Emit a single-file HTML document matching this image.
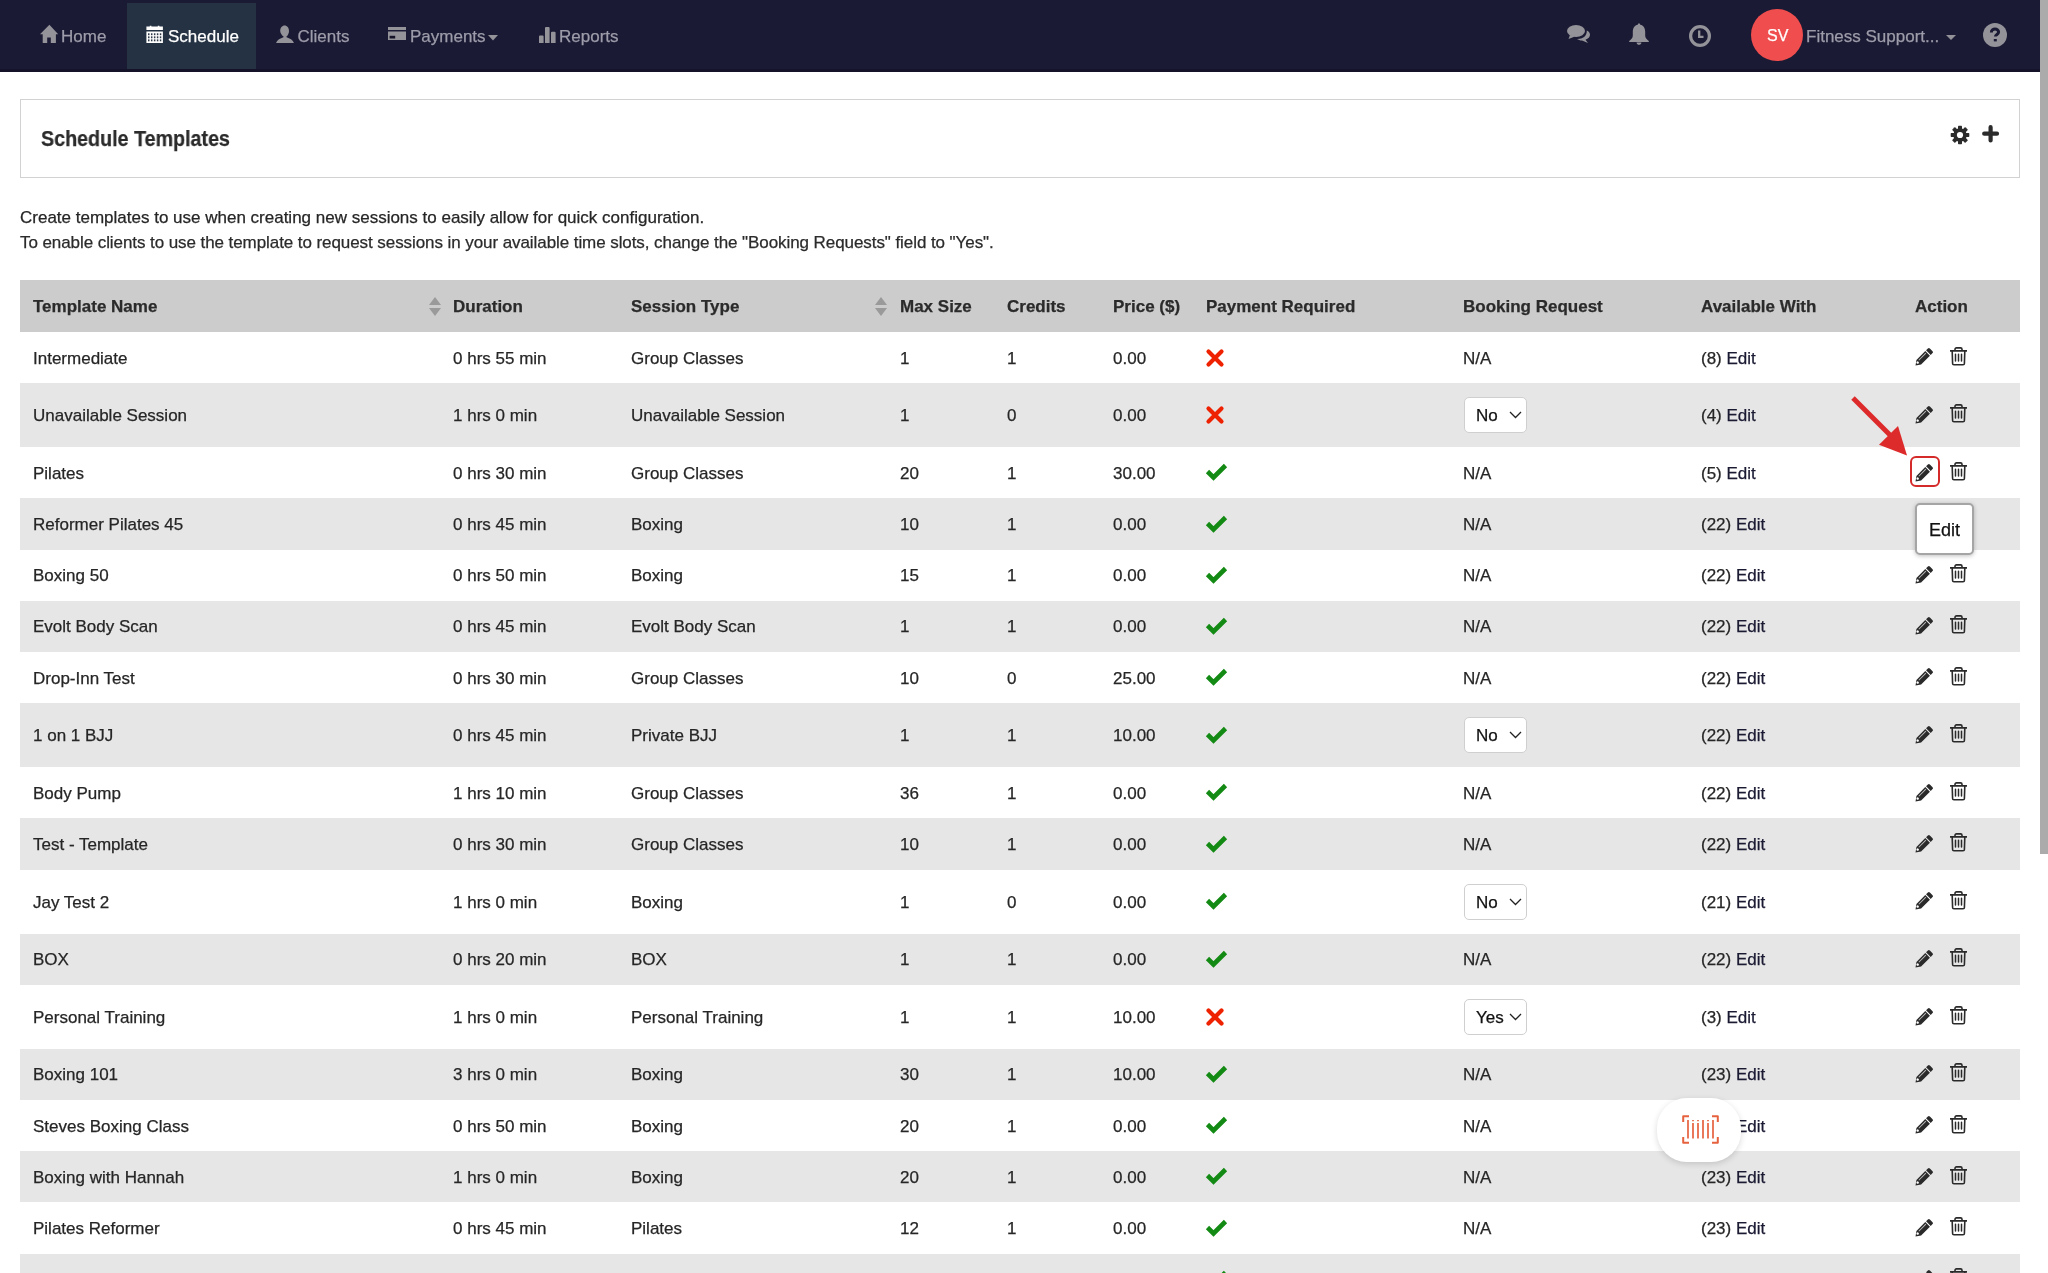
<!DOCTYPE html>
<html><head><meta charset="utf-8"><title>Schedule Templates</title><style>
html,body{margin:0;padding:0;width:2048px;height:1273px;overflow:hidden;background:#fff;font-family:"Liberation Sans",sans-serif;}
.t{position:absolute;white-space:nowrap;-webkit-text-stroke:0.25px currentColor}
.i{position:absolute;display:block;overflow:visible}
.nav{position:absolute;left:0;top:0;width:2040px;height:72px;background:#1b1a34;border-bottom:3px solid #14132a;box-sizing:border-box}
</style></head><body><div id="root" style="position:absolute;left:0;top:0;width:2048px;height:1273px;will-change:transform">
<div class="nav"></div>
<div style="position:absolute;left:127px;top:3px;width:129px;height:66px;background:#243243"></div>
<span class="t" style="left:61px;top:25.91px;font-size:17px;line-height:22px;color:#9c9caa;font-weight:normal;">Home</span>
<span class="t" style="left:168px;top:25.91px;font-size:17px;line-height:22px;color:#ffffff;font-weight:normal;">Schedule</span>
<span class="t" style="left:297.5px;top:25.91px;font-size:17px;line-height:22px;color:#9c9caa;font-weight:normal;">Clients</span>
<span class="t" style="left:410px;top:25.91px;font-size:17px;line-height:22px;color:#9c9caa;font-weight:normal;">Payments</span>
<span class="t" style="left:559px;top:25.91px;font-size:17px;line-height:22px;color:#9c9caa;font-weight:normal;">Reports</span>
<span class="t" style="left:1806px;top:25.91px;font-size:17px;line-height:22px;color:#9c9caa;font-weight:normal;">Fitness Support...</span>
<div style="position:absolute;left:1751px;top:9px;width:52px;height:52px;border-radius:50%;background:#f04e4e"></div>
<span class="t" style="left:1767px;top:25.46px;font-size:16px;line-height:21px;color:#ffffff;font-weight:normal;">SV</span>
<svg class="i" style="left:40px;top:25px" width="18" height="18" viewBox="0 0 18 18"><path fill="#939399" d="M9.4 -0.2 L0 9.3 H2.7 V18 H7.2 V12.4 H10.8 V18 H15.9 V9.3 H18.2 Z"/></svg>
<svg class="i" style="left:146px;top:25px" width="17" height="18" viewBox="0 0 17 18"><path fill="#fff" d="M0.4 1.6h3.4V0.8h1.6v0.8h6.4V0.8h1.6v0.8h3.5v3.3H0.4z M0.4 6.5h16.5V18H0.4z"/><g fill="#2e3846"><rect x="2.00" y="8.30" width="1.5" height="1.9"/><rect x="4.95" y="8.30" width="1.5" height="1.9"/><rect x="7.90" y="8.30" width="1.5" height="1.9"/><rect x="10.85" y="8.30" width="1.5" height="1.9"/><rect x="13.80" y="8.30" width="1.5" height="1.9"/><rect x="2.00" y="11.35" width="1.5" height="1.9"/><rect x="4.95" y="11.35" width="1.5" height="1.9"/><rect x="7.90" y="11.35" width="1.5" height="1.9"/><rect x="10.85" y="11.35" width="1.5" height="1.9"/><rect x="13.80" y="11.35" width="1.5" height="1.9"/><rect x="2.00" y="14.40" width="1.5" height="1.9"/><rect x="4.95" y="14.40" width="1.5" height="1.9"/><rect x="7.90" y="14.40" width="1.5" height="1.9"/><rect x="10.85" y="14.40" width="1.5" height="1.9"/><rect x="13.80" y="14.40" width="1.5" height="1.9"/></g></svg>
<svg class="i" style="left:276px;top:25px" width="18" height="18" viewBox="0 0 18 18"><path fill="#939399" d="M8.6 0.5c2.5 0 4.4 2.3 4.4 5.5 0 2.5-1.2 4.6-2.6 5.6l0.2 0.7c3 1 6.4 2.6 7.4 5.7H0c1-3.1 4.4-4.7 7.4-5.7l0.2-0.7C6.2 10.6 4.2 8.5 4.2 6 4.2 2.8 6.1 0.5 8.6 0.5z"/></svg>
<svg class="i" style="left:388px;top:27.3px" width="18" height="14" viewBox="0 0 18 14"><path fill="#939399" d="M0 0h18v3H0z M0 4.5h18V13H0z"/><rect x="1.6" y="8.8" width="5.6" height="2.7" fill="#141328"/></svg>
<svg class="i" style="left:488px;top:35px" width="10" height="6" viewBox="0 0 10 6"><path fill="#939399" d="M0 0h10L5 5.5z"/></svg>
<svg class="i" style="left:539px;top:27px" width="17" height="16" viewBox="0 0 17 16"><path fill="#939399" d="M0 9.5a1 1 0 0 1 1-1h2.6a1 1 0 0 1 1 1V16H0z M6 1a1 1 0 0 1 1-1h2.6a1 1 0 0 1 1 1V16H6z M12 5.8a1 1 0 0 1 1-1h2.6a1 1 0 0 1 1 1V16H12z"/></svg>
<svg class="i" style="left:1567px;top:25px" width="23" height="18" viewBox="0 0 23 18"><ellipse cx="9" cy="6" rx="9" ry="6" fill="#939399"/><path fill="#939399" d="M3 10 L1.5 14 L8 11.5z"/><path fill="#939399" d="M19.8 5.5c2 1 3.2 2.5 3.2 4.3 0 2.2-1.8 4-4.5 4.9l2.5 3.3-6-2.6c-2 0-3.8-.6-5-1.5 5 .3 10-2.3 9.8-8.4z"/></svg>
<svg class="i" style="left:1629px;top:22.7px" width="20" height="22" viewBox="0 0 20 22"><path fill="#939399" d="M10 0.5c0.8 0 1.2.5 1.2 1.2 3.2.6 5 3.3 5 7v4c0 2 1.5 3.6 3.6 5.2v1H0.2v-1c2.1-1.6 3.6-3.2 3.6-5.2v-4c0-3.7 1.8-6.4 5-7 0-.7.4-1.2 1.2-1.2z M7.6 19.6h4.8c0 1.3-1.1 2.3-2.4 2.3s-2.4-1-2.4-2.3z"/></svg>
<svg class="i" style="left:1689px;top:25px" width="22" height="22" viewBox="0 0 22 22"><circle cx="11" cy="11" r="9.4" fill="none" stroke="#939399" stroke-width="3.2"/><path fill="none" stroke="#939399" stroke-width="2.3" d="M10.2 5.5v6.3h4.3"/></svg>
<svg class="i" style="left:1946px;top:35px" width="10" height="6" viewBox="0 0 10 6"><path fill="#939399" d="M0 0h10L5 5z"/></svg>
<svg class="i" style="left:1983px;top:23px" width="24" height="24" viewBox="0 0 24 24"><circle cx="12" cy="12" r="12" fill="#939399"/><path fill="none" stroke="#1b1a34" stroke-width="3" d="M8.4 9.4c0-2.2 1.6-3.4 3.6-3.4s3.6 1.2 3.6 3c0 2.4-3.2 2.4-3.2 4.6"/><rect x="10.8" y="16" width="3" height="2.4" fill="#1b1a34"/></svg>
<div style="position:absolute;left:2040px;top:0;width:8px;height:854px;background:#ababab"></div>
<div style="position:absolute;left:20px;top:99px;width:1998px;height:77px;border:1px solid #d2d2d2"></div>
<span class="t" style="left:41px;top:124.18px;font-size:22px;line-height:29px;color:#2b2b2b;font-weight:bold;transform:scaleX(0.895);transform-origin:0 0">Schedule Templates</span>
<svg class="i" style="left:1950px;top:124.8px" width="20" height="20" viewBox="0 0 20 20"><g fill="#2b2b2b"><circle cx="10" cy="10" r="6.7"/><rect x="8" y="0.7" width="4" height="5" rx="0.7" transform="rotate(0 10 10)"/><rect x="8" y="0.7" width="4" height="5" rx="0.7" transform="rotate(45 10 10)"/><rect x="8" y="0.7" width="4" height="5" rx="0.7" transform="rotate(90 10 10)"/><rect x="8" y="0.7" width="4" height="5" rx="0.7" transform="rotate(135 10 10)"/><rect x="8" y="0.7" width="4" height="5" rx="0.7" transform="rotate(180 10 10)"/><rect x="8" y="0.7" width="4" height="5" rx="0.7" transform="rotate(225 10 10)"/><rect x="8" y="0.7" width="4" height="5" rx="0.7" transform="rotate(270 10 10)"/><rect x="8" y="0.7" width="4" height="5" rx="0.7" transform="rotate(315 10 10)"/></g><circle cx="10" cy="10" r="3.1" fill="#fff"/></svg>
<svg class="i" style="left:1981.5px;top:125px" width="18" height="18" viewBox="0 0 18 18"><path stroke="#2b2b2b" stroke-width="4.2" stroke-linecap="round" d="M8.6 2.2V15.4M2.2 8.7H15"/></svg>
<span class="t" style="left:20px;top:206.81px;font-size:17px;line-height:22px;color:#262626;font-weight:normal;">Create templates to use when creating new sessions to easily allow for quick configuration.</span>
<span class="t" style="left:20px;top:231.51px;font-size:17px;line-height:22px;color:#2b2b2b;font-weight:normal;letter-spacing:-0.075px">To enable clients to use the template to request sessions in your available time slots, change the "Booking Requests" field to "Yes".</span>
<div style="position:absolute;left:20px;top:280px;width:2000px;height:52px;background:#cccccc"></div>
<span class="t" style="left:33px;top:295.91px;font-size:17px;line-height:22px;color:#2b2b2b;font-weight:bold;">Template Name</span>
<span class="t" style="left:453px;top:295.91px;font-size:17px;line-height:22px;color:#2b2b2b;font-weight:bold;">Duration</span>
<span class="t" style="left:631px;top:295.91px;font-size:17px;line-height:22px;color:#2b2b2b;font-weight:bold;">Session Type</span>
<span class="t" style="left:900px;top:295.91px;font-size:17px;line-height:22px;color:#2b2b2b;font-weight:bold;">Max Size</span>
<span class="t" style="left:1007px;top:295.91px;font-size:17px;line-height:22px;color:#2b2b2b;font-weight:bold;">Credits</span>
<span class="t" style="left:1113px;top:295.91px;font-size:17px;line-height:22px;color:#2b2b2b;font-weight:bold;">Price ($)</span>
<span class="t" style="left:1206px;top:295.91px;font-size:17px;line-height:22px;color:#2b2b2b;font-weight:bold;">Payment Required</span>
<span class="t" style="left:1463px;top:295.91px;font-size:17px;line-height:22px;color:#2b2b2b;font-weight:bold;">Booking Request</span>
<span class="t" style="left:1701px;top:295.91px;font-size:17px;line-height:22px;color:#2b2b2b;font-weight:bold;">Available With</span>
<span class="t" style="left:1915px;top:295.91px;font-size:17px;line-height:22px;color:#2b2b2b;font-weight:bold;">Action</span>
<svg class="i" style="left:428.5px;top:297px" width="12" height="19" viewBox="0 0 12 19"><path fill="#9a9a9a" d="M6 0L12 8H0z"/><path fill="#9a9a9a" d="M0 11h12L6 19z"/></svg>
<svg class="i" style="left:875px;top:297px" width="12" height="19" viewBox="0 0 12 19"><path fill="#9a9a9a" d="M6 0L12 8H0z"/><path fill="#9a9a9a" d="M0 11h12L6 19z"/></svg>
<div style="position:absolute;left:20px;top:332.00px;width:2000px;height:51.2px;background:#ffffff"></div>
<span class="t" style="left:33px;top:347.51px;font-size:17px;line-height:22px;color:#262626;font-weight:normal;">Intermediate</span>
<span class="t" style="left:453px;top:347.51px;font-size:17px;line-height:22px;color:#262626;font-weight:normal;">0 hrs 55 min</span>
<span class="t" style="left:631px;top:347.51px;font-size:17px;line-height:22px;color:#262626;font-weight:normal;">Group Classes</span>
<span class="t" style="left:900px;top:347.51px;font-size:17px;line-height:22px;color:#262626;font-weight:normal;">1</span>
<span class="t" style="left:1007px;top:347.51px;font-size:17px;line-height:22px;color:#262626;font-weight:normal;">1</span>
<span class="t" style="left:1113px;top:347.51px;font-size:17px;line-height:22px;color:#262626;font-weight:normal;">0.00</span>
<svg class="i" style="left:1205.5px;top:348.60px" width="18" height="18" viewBox="0 0 18 18"><path stroke="#ee2200" stroke-width="4.2" stroke-linecap="round" d="M2.5 2.5L15.5 15.5M15.5 2.5L2.5 15.5"/></svg>
<span class="t" style="left:1463px;top:347.51px;font-size:17px;line-height:22px;color:#262626;font-weight:normal;">N/A</span>
<span class="t" style="left:1701px;top:347.51px;font-size:17px;line-height:22px;color:#262626">(8) <span style="color:#1a1a33">Edit</span></span>
<svg class="i" style="left:1914.5px;top:347.40px" width="19" height="19" viewBox="0 0 19 19"><g transform="rotate(45 9.5 9.5)"><path fill="#2a2a2a" d="M6.2 1.4a1.4 1.4 0 0 1 1.4-1.4h3.8a1.4 1.4 0 0 1 1.4 1.4V4H6.2z M6.2 5.1h6.6V17.6L9.5 22.2 6.2 17.6z"/><rect x="7.6" y="6.2" width="1" height="10" fill="#bbb"/><circle cx="8.9" cy="18.6" r="1.25" fill="#fff"/></g></svg>
<svg class="i" style="left:1950px;top:346.60px" width="17" height="19" viewBox="0 0 17 19"><path fill="none" stroke="#2a2a2a" stroke-width="1.6" d="M0 3.9H17 M5 3.9V2.2C5 1.4 5.6 0.9 6.4 0.9h4.2c.8 0 1.4.5 1.4 1.3v1.7 M2.2 4.2l.4 12.2c0 .8.6 1.3 1.4 1.3h9c.8 0 1.4-.5 1.4-1.3l.4-12.2"/><path stroke="#2a2a2a" stroke-width="1.5" stroke-linecap="round" d="M5.5 7.3v6.8M8.5 7.3v6.8M11.5 7.3v6.8"/></svg>
<div style="position:absolute;left:20px;top:383.20px;width:2000px;height:64.0px;background:#e6e6e6"></div>
<span class="t" style="left:33px;top:405.11px;font-size:17px;line-height:22px;color:#262626;font-weight:normal;">Unavailable Session</span>
<span class="t" style="left:453px;top:405.11px;font-size:17px;line-height:22px;color:#262626;font-weight:normal;">1 hrs 0 min</span>
<span class="t" style="left:631px;top:405.11px;font-size:17px;line-height:22px;color:#262626;font-weight:normal;">Unavailable Session</span>
<span class="t" style="left:900px;top:405.11px;font-size:17px;line-height:22px;color:#262626;font-weight:normal;">1</span>
<span class="t" style="left:1007px;top:405.11px;font-size:17px;line-height:22px;color:#262626;font-weight:normal;">0</span>
<span class="t" style="left:1113px;top:405.11px;font-size:17px;line-height:22px;color:#262626;font-weight:normal;">0.00</span>
<svg class="i" style="left:1205.5px;top:406.20px" width="18" height="18" viewBox="0 0 18 18"><path stroke="#ee2200" stroke-width="4.2" stroke-linecap="round" d="M2.5 2.5L15.5 15.5M15.5 2.5L2.5 15.5"/></svg>
<div style="position:absolute;left:1464px;top:397.20px;width:61px;height:34px;border:1px solid #cfcfcf;border-radius:5px;background:#fff"></div>
<span class="t" style="left:1476px;top:405.11px;font-size:17px;line-height:22px;color:#111111;font-weight:normal;">No</span>
<svg class="i" style="left:1509px;top:411.20px" width="13" height="8" viewBox="0 0 13 8"><path fill="none" stroke="#222" stroke-width="1.3" d="M1 1l5.5 5.5L12 1"/></svg>
<span class="t" style="left:1701px;top:405.11px;font-size:17px;line-height:22px;color:#262626">(4) <span style="color:#1a1a33">Edit</span></span>
<svg class="i" style="left:1914.5px;top:405.00px" width="19" height="19" viewBox="0 0 19 19"><g transform="rotate(45 9.5 9.5)"><path fill="#2a2a2a" d="M6.2 1.4a1.4 1.4 0 0 1 1.4-1.4h3.8a1.4 1.4 0 0 1 1.4 1.4V4H6.2z M6.2 5.1h6.6V17.6L9.5 22.2 6.2 17.6z"/><rect x="7.6" y="6.2" width="1" height="10" fill="#bbb"/><circle cx="8.9" cy="18.6" r="1.25" fill="#fff"/></g></svg>
<svg class="i" style="left:1950px;top:404.20px" width="17" height="19" viewBox="0 0 17 19"><path fill="none" stroke="#2a2a2a" stroke-width="1.6" d="M0 3.9H17 M5 3.9V2.2C5 1.4 5.6 0.9 6.4 0.9h4.2c.8 0 1.4.5 1.4 1.3v1.7 M2.2 4.2l.4 12.2c0 .8.6 1.3 1.4 1.3h9c.8 0 1.4-.5 1.4-1.3l.4-12.2"/><path stroke="#2a2a2a" stroke-width="1.5" stroke-linecap="round" d="M5.5 7.3v6.8M8.5 7.3v6.8M11.5 7.3v6.8"/></svg>
<div style="position:absolute;left:20px;top:447.20px;width:2000px;height:51.2px;background:#ffffff"></div>
<span class="t" style="left:33px;top:462.71px;font-size:17px;line-height:22px;color:#262626;font-weight:normal;">Pilates</span>
<span class="t" style="left:453px;top:462.71px;font-size:17px;line-height:22px;color:#262626;font-weight:normal;">0 hrs 30 min</span>
<span class="t" style="left:631px;top:462.71px;font-size:17px;line-height:22px;color:#262626;font-weight:normal;">Group Classes</span>
<span class="t" style="left:900px;top:462.71px;font-size:17px;line-height:22px;color:#262626;font-weight:normal;">20</span>
<span class="t" style="left:1007px;top:462.71px;font-size:17px;line-height:22px;color:#262626;font-weight:normal;">1</span>
<span class="t" style="left:1113px;top:462.71px;font-size:17px;line-height:22px;color:#262626;font-weight:normal;">30.00</span>
<svg class="i" style="left:1206px;top:463.30px" width="22" height="18" viewBox="0 0 22 18"><path fill="none" stroke="#138a13" stroke-width="4.6" d="M1.5 8.5L7.5 14.5L19.5 2.5"/></svg>
<span class="t" style="left:1463px;top:462.71px;font-size:17px;line-height:22px;color:#262626;font-weight:normal;">N/A</span>
<span class="t" style="left:1701px;top:462.71px;font-size:17px;line-height:22px;color:#262626">(5) <span style="color:#1a1a33">Edit</span></span>
<svg class="i" style="left:1914.5px;top:462.60px" width="19" height="19" viewBox="0 0 19 19"><g transform="rotate(45 9.5 9.5)"><path fill="#2a2a2a" d="M6.2 1.4a1.4 1.4 0 0 1 1.4-1.4h3.8a1.4 1.4 0 0 1 1.4 1.4V4H6.2z M6.2 5.1h6.6V17.6L9.5 22.2 6.2 17.6z"/><rect x="7.6" y="6.2" width="1" height="10" fill="#bbb"/><circle cx="8.9" cy="18.6" r="1.25" fill="#fff"/></g></svg>
<svg class="i" style="left:1950px;top:461.80px" width="17" height="19" viewBox="0 0 17 19"><path fill="none" stroke="#2a2a2a" stroke-width="1.6" d="M0 3.9H17 M5 3.9V2.2C5 1.4 5.6 0.9 6.4 0.9h4.2c.8 0 1.4.5 1.4 1.3v1.7 M2.2 4.2l.4 12.2c0 .8.6 1.3 1.4 1.3h9c.8 0 1.4-.5 1.4-1.3l.4-12.2"/><path stroke="#2a2a2a" stroke-width="1.5" stroke-linecap="round" d="M5.5 7.3v6.8M8.5 7.3v6.8M11.5 7.3v6.8"/></svg>
<div style="position:absolute;left:20px;top:498.40px;width:2000px;height:51.2px;background:#e6e6e6"></div>
<span class="t" style="left:33px;top:513.91px;font-size:17px;line-height:22px;color:#262626;font-weight:normal;">Reformer Pilates 45</span>
<span class="t" style="left:453px;top:513.91px;font-size:17px;line-height:22px;color:#262626;font-weight:normal;">0 hrs 45 min</span>
<span class="t" style="left:631px;top:513.91px;font-size:17px;line-height:22px;color:#262626;font-weight:normal;">Boxing</span>
<span class="t" style="left:900px;top:513.91px;font-size:17px;line-height:22px;color:#262626;font-weight:normal;">10</span>
<span class="t" style="left:1007px;top:513.91px;font-size:17px;line-height:22px;color:#262626;font-weight:normal;">1</span>
<span class="t" style="left:1113px;top:513.91px;font-size:17px;line-height:22px;color:#262626;font-weight:normal;">0.00</span>
<svg class="i" style="left:1206px;top:514.50px" width="22" height="18" viewBox="0 0 22 18"><path fill="none" stroke="#138a13" stroke-width="4.6" d="M1.5 8.5L7.5 14.5L19.5 2.5"/></svg>
<span class="t" style="left:1463px;top:513.91px;font-size:17px;line-height:22px;color:#262626;font-weight:normal;">N/A</span>
<span class="t" style="left:1701px;top:513.91px;font-size:17px;line-height:22px;color:#262626">(22) <span style="color:#1a1a33">Edit</span></span>
<div style="position:absolute;left:20px;top:549.60px;width:2000px;height:51.2px;background:#ffffff"></div>
<span class="t" style="left:33px;top:565.11px;font-size:17px;line-height:22px;color:#262626;font-weight:normal;">Boxing 50</span>
<span class="t" style="left:453px;top:565.11px;font-size:17px;line-height:22px;color:#262626;font-weight:normal;">0 hrs 50 min</span>
<span class="t" style="left:631px;top:565.11px;font-size:17px;line-height:22px;color:#262626;font-weight:normal;">Boxing</span>
<span class="t" style="left:900px;top:565.11px;font-size:17px;line-height:22px;color:#262626;font-weight:normal;">15</span>
<span class="t" style="left:1007px;top:565.11px;font-size:17px;line-height:22px;color:#262626;font-weight:normal;">1</span>
<span class="t" style="left:1113px;top:565.11px;font-size:17px;line-height:22px;color:#262626;font-weight:normal;">0.00</span>
<svg class="i" style="left:1206px;top:565.70px" width="22" height="18" viewBox="0 0 22 18"><path fill="none" stroke="#138a13" stroke-width="4.6" d="M1.5 8.5L7.5 14.5L19.5 2.5"/></svg>
<span class="t" style="left:1463px;top:565.11px;font-size:17px;line-height:22px;color:#262626;font-weight:normal;">N/A</span>
<span class="t" style="left:1701px;top:565.11px;font-size:17px;line-height:22px;color:#262626">(22) <span style="color:#1a1a33">Edit</span></span>
<svg class="i" style="left:1914.5px;top:565.00px" width="19" height="19" viewBox="0 0 19 19"><g transform="rotate(45 9.5 9.5)"><path fill="#2a2a2a" d="M6.2 1.4a1.4 1.4 0 0 1 1.4-1.4h3.8a1.4 1.4 0 0 1 1.4 1.4V4H6.2z M6.2 5.1h6.6V17.6L9.5 22.2 6.2 17.6z"/><rect x="7.6" y="6.2" width="1" height="10" fill="#bbb"/><circle cx="8.9" cy="18.6" r="1.25" fill="#fff"/></g></svg>
<svg class="i" style="left:1950px;top:564.20px" width="17" height="19" viewBox="0 0 17 19"><path fill="none" stroke="#2a2a2a" stroke-width="1.6" d="M0 3.9H17 M5 3.9V2.2C5 1.4 5.6 0.9 6.4 0.9h4.2c.8 0 1.4.5 1.4 1.3v1.7 M2.2 4.2l.4 12.2c0 .8.6 1.3 1.4 1.3h9c.8 0 1.4-.5 1.4-1.3l.4-12.2"/><path stroke="#2a2a2a" stroke-width="1.5" stroke-linecap="round" d="M5.5 7.3v6.8M8.5 7.3v6.8M11.5 7.3v6.8"/></svg>
<div style="position:absolute;left:20px;top:600.80px;width:2000px;height:51.2px;background:#e6e6e6"></div>
<span class="t" style="left:33px;top:616.31px;font-size:17px;line-height:22px;color:#262626;font-weight:normal;">Evolt Body Scan</span>
<span class="t" style="left:453px;top:616.31px;font-size:17px;line-height:22px;color:#262626;font-weight:normal;">0 hrs 45 min</span>
<span class="t" style="left:631px;top:616.31px;font-size:17px;line-height:22px;color:#262626;font-weight:normal;">Evolt Body Scan</span>
<span class="t" style="left:900px;top:616.31px;font-size:17px;line-height:22px;color:#262626;font-weight:normal;">1</span>
<span class="t" style="left:1007px;top:616.31px;font-size:17px;line-height:22px;color:#262626;font-weight:normal;">1</span>
<span class="t" style="left:1113px;top:616.31px;font-size:17px;line-height:22px;color:#262626;font-weight:normal;">0.00</span>
<svg class="i" style="left:1206px;top:616.90px" width="22" height="18" viewBox="0 0 22 18"><path fill="none" stroke="#138a13" stroke-width="4.6" d="M1.5 8.5L7.5 14.5L19.5 2.5"/></svg>
<span class="t" style="left:1463px;top:616.31px;font-size:17px;line-height:22px;color:#262626;font-weight:normal;">N/A</span>
<span class="t" style="left:1701px;top:616.31px;font-size:17px;line-height:22px;color:#262626">(22) <span style="color:#1a1a33">Edit</span></span>
<svg class="i" style="left:1914.5px;top:616.20px" width="19" height="19" viewBox="0 0 19 19"><g transform="rotate(45 9.5 9.5)"><path fill="#2a2a2a" d="M6.2 1.4a1.4 1.4 0 0 1 1.4-1.4h3.8a1.4 1.4 0 0 1 1.4 1.4V4H6.2z M6.2 5.1h6.6V17.6L9.5 22.2 6.2 17.6z"/><rect x="7.6" y="6.2" width="1" height="10" fill="#bbb"/><circle cx="8.9" cy="18.6" r="1.25" fill="#fff"/></g></svg>
<svg class="i" style="left:1950px;top:615.40px" width="17" height="19" viewBox="0 0 17 19"><path fill="none" stroke="#2a2a2a" stroke-width="1.6" d="M0 3.9H17 M5 3.9V2.2C5 1.4 5.6 0.9 6.4 0.9h4.2c.8 0 1.4.5 1.4 1.3v1.7 M2.2 4.2l.4 12.2c0 .8.6 1.3 1.4 1.3h9c.8 0 1.4-.5 1.4-1.3l.4-12.2"/><path stroke="#2a2a2a" stroke-width="1.5" stroke-linecap="round" d="M5.5 7.3v6.8M8.5 7.3v6.8M11.5 7.3v6.8"/></svg>
<div style="position:absolute;left:20px;top:652.00px;width:2000px;height:51.2px;background:#ffffff"></div>
<span class="t" style="left:33px;top:667.51px;font-size:17px;line-height:22px;color:#262626;font-weight:normal;">Drop-Inn Test</span>
<span class="t" style="left:453px;top:667.51px;font-size:17px;line-height:22px;color:#262626;font-weight:normal;">0 hrs 30 min</span>
<span class="t" style="left:631px;top:667.51px;font-size:17px;line-height:22px;color:#262626;font-weight:normal;">Group Classes</span>
<span class="t" style="left:900px;top:667.51px;font-size:17px;line-height:22px;color:#262626;font-weight:normal;">10</span>
<span class="t" style="left:1007px;top:667.51px;font-size:17px;line-height:22px;color:#262626;font-weight:normal;">0</span>
<span class="t" style="left:1113px;top:667.51px;font-size:17px;line-height:22px;color:#262626;font-weight:normal;">25.00</span>
<svg class="i" style="left:1206px;top:668.10px" width="22" height="18" viewBox="0 0 22 18"><path fill="none" stroke="#138a13" stroke-width="4.6" d="M1.5 8.5L7.5 14.5L19.5 2.5"/></svg>
<span class="t" style="left:1463px;top:667.51px;font-size:17px;line-height:22px;color:#262626;font-weight:normal;">N/A</span>
<span class="t" style="left:1701px;top:667.51px;font-size:17px;line-height:22px;color:#262626">(22) <span style="color:#1a1a33">Edit</span></span>
<svg class="i" style="left:1914.5px;top:667.40px" width="19" height="19" viewBox="0 0 19 19"><g transform="rotate(45 9.5 9.5)"><path fill="#2a2a2a" d="M6.2 1.4a1.4 1.4 0 0 1 1.4-1.4h3.8a1.4 1.4 0 0 1 1.4 1.4V4H6.2z M6.2 5.1h6.6V17.6L9.5 22.2 6.2 17.6z"/><rect x="7.6" y="6.2" width="1" height="10" fill="#bbb"/><circle cx="8.9" cy="18.6" r="1.25" fill="#fff"/></g></svg>
<svg class="i" style="left:1950px;top:666.60px" width="17" height="19" viewBox="0 0 17 19"><path fill="none" stroke="#2a2a2a" stroke-width="1.6" d="M0 3.9H17 M5 3.9V2.2C5 1.4 5.6 0.9 6.4 0.9h4.2c.8 0 1.4.5 1.4 1.3v1.7 M2.2 4.2l.4 12.2c0 .8.6 1.3 1.4 1.3h9c.8 0 1.4-.5 1.4-1.3l.4-12.2"/><path stroke="#2a2a2a" stroke-width="1.5" stroke-linecap="round" d="M5.5 7.3v6.8M8.5 7.3v6.8M11.5 7.3v6.8"/></svg>
<div style="position:absolute;left:20px;top:703.20px;width:2000px;height:64.0px;background:#e6e6e6"></div>
<span class="t" style="left:33px;top:725.11px;font-size:17px;line-height:22px;color:#262626;font-weight:normal;">1 on 1 BJJ</span>
<span class="t" style="left:453px;top:725.11px;font-size:17px;line-height:22px;color:#262626;font-weight:normal;">0 hrs 45 min</span>
<span class="t" style="left:631px;top:725.11px;font-size:17px;line-height:22px;color:#262626;font-weight:normal;">Private BJJ</span>
<span class="t" style="left:900px;top:725.11px;font-size:17px;line-height:22px;color:#262626;font-weight:normal;">1</span>
<span class="t" style="left:1007px;top:725.11px;font-size:17px;line-height:22px;color:#262626;font-weight:normal;">1</span>
<span class="t" style="left:1113px;top:725.11px;font-size:17px;line-height:22px;color:#262626;font-weight:normal;">10.00</span>
<svg class="i" style="left:1206px;top:725.70px" width="22" height="18" viewBox="0 0 22 18"><path fill="none" stroke="#138a13" stroke-width="4.6" d="M1.5 8.5L7.5 14.5L19.5 2.5"/></svg>
<div style="position:absolute;left:1464px;top:717.20px;width:61px;height:34px;border:1px solid #cfcfcf;border-radius:5px;background:#fff"></div>
<span class="t" style="left:1476px;top:725.11px;font-size:17px;line-height:22px;color:#111111;font-weight:normal;">No</span>
<svg class="i" style="left:1509px;top:731.20px" width="13" height="8" viewBox="0 0 13 8"><path fill="none" stroke="#222" stroke-width="1.3" d="M1 1l5.5 5.5L12 1"/></svg>
<span class="t" style="left:1701px;top:725.11px;font-size:17px;line-height:22px;color:#262626">(22) <span style="color:#1a1a33">Edit</span></span>
<svg class="i" style="left:1914.5px;top:725.00px" width="19" height="19" viewBox="0 0 19 19"><g transform="rotate(45 9.5 9.5)"><path fill="#2a2a2a" d="M6.2 1.4a1.4 1.4 0 0 1 1.4-1.4h3.8a1.4 1.4 0 0 1 1.4 1.4V4H6.2z M6.2 5.1h6.6V17.6L9.5 22.2 6.2 17.6z"/><rect x="7.6" y="6.2" width="1" height="10" fill="#bbb"/><circle cx="8.9" cy="18.6" r="1.25" fill="#fff"/></g></svg>
<svg class="i" style="left:1950px;top:724.20px" width="17" height="19" viewBox="0 0 17 19"><path fill="none" stroke="#2a2a2a" stroke-width="1.6" d="M0 3.9H17 M5 3.9V2.2C5 1.4 5.6 0.9 6.4 0.9h4.2c.8 0 1.4.5 1.4 1.3v1.7 M2.2 4.2l.4 12.2c0 .8.6 1.3 1.4 1.3h9c.8 0 1.4-.5 1.4-1.3l.4-12.2"/><path stroke="#2a2a2a" stroke-width="1.5" stroke-linecap="round" d="M5.5 7.3v6.8M8.5 7.3v6.8M11.5 7.3v6.8"/></svg>
<div style="position:absolute;left:20px;top:767.20px;width:2000px;height:51.2px;background:#ffffff"></div>
<span class="t" style="left:33px;top:782.71px;font-size:17px;line-height:22px;color:#262626;font-weight:normal;">Body Pump</span>
<span class="t" style="left:453px;top:782.71px;font-size:17px;line-height:22px;color:#262626;font-weight:normal;">1 hrs 10 min</span>
<span class="t" style="left:631px;top:782.71px;font-size:17px;line-height:22px;color:#262626;font-weight:normal;">Group Classes</span>
<span class="t" style="left:900px;top:782.71px;font-size:17px;line-height:22px;color:#262626;font-weight:normal;">36</span>
<span class="t" style="left:1007px;top:782.71px;font-size:17px;line-height:22px;color:#262626;font-weight:normal;">1</span>
<span class="t" style="left:1113px;top:782.71px;font-size:17px;line-height:22px;color:#262626;font-weight:normal;">0.00</span>
<svg class="i" style="left:1206px;top:783.30px" width="22" height="18" viewBox="0 0 22 18"><path fill="none" stroke="#138a13" stroke-width="4.6" d="M1.5 8.5L7.5 14.5L19.5 2.5"/></svg>
<span class="t" style="left:1463px;top:782.71px;font-size:17px;line-height:22px;color:#262626;font-weight:normal;">N/A</span>
<span class="t" style="left:1701px;top:782.71px;font-size:17px;line-height:22px;color:#262626">(22) <span style="color:#1a1a33">Edit</span></span>
<svg class="i" style="left:1914.5px;top:782.60px" width="19" height="19" viewBox="0 0 19 19"><g transform="rotate(45 9.5 9.5)"><path fill="#2a2a2a" d="M6.2 1.4a1.4 1.4 0 0 1 1.4-1.4h3.8a1.4 1.4 0 0 1 1.4 1.4V4H6.2z M6.2 5.1h6.6V17.6L9.5 22.2 6.2 17.6z"/><rect x="7.6" y="6.2" width="1" height="10" fill="#bbb"/><circle cx="8.9" cy="18.6" r="1.25" fill="#fff"/></g></svg>
<svg class="i" style="left:1950px;top:781.80px" width="17" height="19" viewBox="0 0 17 19"><path fill="none" stroke="#2a2a2a" stroke-width="1.6" d="M0 3.9H17 M5 3.9V2.2C5 1.4 5.6 0.9 6.4 0.9h4.2c.8 0 1.4.5 1.4 1.3v1.7 M2.2 4.2l.4 12.2c0 .8.6 1.3 1.4 1.3h9c.8 0 1.4-.5 1.4-1.3l.4-12.2"/><path stroke="#2a2a2a" stroke-width="1.5" stroke-linecap="round" d="M5.5 7.3v6.8M8.5 7.3v6.8M11.5 7.3v6.8"/></svg>
<div style="position:absolute;left:20px;top:818.40px;width:2000px;height:51.2px;background:#e6e6e6"></div>
<span class="t" style="left:33px;top:833.91px;font-size:17px;line-height:22px;color:#262626;font-weight:normal;">Test - Template</span>
<span class="t" style="left:453px;top:833.91px;font-size:17px;line-height:22px;color:#262626;font-weight:normal;">0 hrs 30 min</span>
<span class="t" style="left:631px;top:833.91px;font-size:17px;line-height:22px;color:#262626;font-weight:normal;">Group Classes</span>
<span class="t" style="left:900px;top:833.91px;font-size:17px;line-height:22px;color:#262626;font-weight:normal;">10</span>
<span class="t" style="left:1007px;top:833.91px;font-size:17px;line-height:22px;color:#262626;font-weight:normal;">1</span>
<span class="t" style="left:1113px;top:833.91px;font-size:17px;line-height:22px;color:#262626;font-weight:normal;">0.00</span>
<svg class="i" style="left:1206px;top:834.50px" width="22" height="18" viewBox="0 0 22 18"><path fill="none" stroke="#138a13" stroke-width="4.6" d="M1.5 8.5L7.5 14.5L19.5 2.5"/></svg>
<span class="t" style="left:1463px;top:833.91px;font-size:17px;line-height:22px;color:#262626;font-weight:normal;">N/A</span>
<span class="t" style="left:1701px;top:833.91px;font-size:17px;line-height:22px;color:#262626">(22) <span style="color:#1a1a33">Edit</span></span>
<svg class="i" style="left:1914.5px;top:833.80px" width="19" height="19" viewBox="0 0 19 19"><g transform="rotate(45 9.5 9.5)"><path fill="#2a2a2a" d="M6.2 1.4a1.4 1.4 0 0 1 1.4-1.4h3.8a1.4 1.4 0 0 1 1.4 1.4V4H6.2z M6.2 5.1h6.6V17.6L9.5 22.2 6.2 17.6z"/><rect x="7.6" y="6.2" width="1" height="10" fill="#bbb"/><circle cx="8.9" cy="18.6" r="1.25" fill="#fff"/></g></svg>
<svg class="i" style="left:1950px;top:833.00px" width="17" height="19" viewBox="0 0 17 19"><path fill="none" stroke="#2a2a2a" stroke-width="1.6" d="M0 3.9H17 M5 3.9V2.2C5 1.4 5.6 0.9 6.4 0.9h4.2c.8 0 1.4.5 1.4 1.3v1.7 M2.2 4.2l.4 12.2c0 .8.6 1.3 1.4 1.3h9c.8 0 1.4-.5 1.4-1.3l.4-12.2"/><path stroke="#2a2a2a" stroke-width="1.5" stroke-linecap="round" d="M5.5 7.3v6.8M8.5 7.3v6.8M11.5 7.3v6.8"/></svg>
<div style="position:absolute;left:20px;top:869.60px;width:2000px;height:64.0px;background:#ffffff"></div>
<span class="t" style="left:33px;top:891.51px;font-size:17px;line-height:22px;color:#262626;font-weight:normal;">Jay Test 2</span>
<span class="t" style="left:453px;top:891.51px;font-size:17px;line-height:22px;color:#262626;font-weight:normal;">1 hrs 0 min</span>
<span class="t" style="left:631px;top:891.51px;font-size:17px;line-height:22px;color:#262626;font-weight:normal;">Boxing</span>
<span class="t" style="left:900px;top:891.51px;font-size:17px;line-height:22px;color:#262626;font-weight:normal;">1</span>
<span class="t" style="left:1007px;top:891.51px;font-size:17px;line-height:22px;color:#262626;font-weight:normal;">0</span>
<span class="t" style="left:1113px;top:891.51px;font-size:17px;line-height:22px;color:#262626;font-weight:normal;">0.00</span>
<svg class="i" style="left:1206px;top:892.10px" width="22" height="18" viewBox="0 0 22 18"><path fill="none" stroke="#138a13" stroke-width="4.6" d="M1.5 8.5L7.5 14.5L19.5 2.5"/></svg>
<div style="position:absolute;left:1464px;top:883.60px;width:61px;height:34px;border:1px solid #cfcfcf;border-radius:5px;background:#fff"></div>
<span class="t" style="left:1476px;top:891.51px;font-size:17px;line-height:22px;color:#111111;font-weight:normal;">No</span>
<svg class="i" style="left:1509px;top:897.60px" width="13" height="8" viewBox="0 0 13 8"><path fill="none" stroke="#222" stroke-width="1.3" d="M1 1l5.5 5.5L12 1"/></svg>
<span class="t" style="left:1701px;top:891.51px;font-size:17px;line-height:22px;color:#262626">(21) <span style="color:#1a1a33">Edit</span></span>
<svg class="i" style="left:1914.5px;top:891.40px" width="19" height="19" viewBox="0 0 19 19"><g transform="rotate(45 9.5 9.5)"><path fill="#2a2a2a" d="M6.2 1.4a1.4 1.4 0 0 1 1.4-1.4h3.8a1.4 1.4 0 0 1 1.4 1.4V4H6.2z M6.2 5.1h6.6V17.6L9.5 22.2 6.2 17.6z"/><rect x="7.6" y="6.2" width="1" height="10" fill="#bbb"/><circle cx="8.9" cy="18.6" r="1.25" fill="#fff"/></g></svg>
<svg class="i" style="left:1950px;top:890.60px" width="17" height="19" viewBox="0 0 17 19"><path fill="none" stroke="#2a2a2a" stroke-width="1.6" d="M0 3.9H17 M5 3.9V2.2C5 1.4 5.6 0.9 6.4 0.9h4.2c.8 0 1.4.5 1.4 1.3v1.7 M2.2 4.2l.4 12.2c0 .8.6 1.3 1.4 1.3h9c.8 0 1.4-.5 1.4-1.3l.4-12.2"/><path stroke="#2a2a2a" stroke-width="1.5" stroke-linecap="round" d="M5.5 7.3v6.8M8.5 7.3v6.8M11.5 7.3v6.8"/></svg>
<div style="position:absolute;left:20px;top:933.60px;width:2000px;height:51.2px;background:#e6e6e6"></div>
<span class="t" style="left:33px;top:949.11px;font-size:17px;line-height:22px;color:#262626;font-weight:normal;">BOX</span>
<span class="t" style="left:453px;top:949.11px;font-size:17px;line-height:22px;color:#262626;font-weight:normal;">0 hrs 20 min</span>
<span class="t" style="left:631px;top:949.11px;font-size:17px;line-height:22px;color:#262626;font-weight:normal;">BOX</span>
<span class="t" style="left:900px;top:949.11px;font-size:17px;line-height:22px;color:#262626;font-weight:normal;">1</span>
<span class="t" style="left:1007px;top:949.11px;font-size:17px;line-height:22px;color:#262626;font-weight:normal;">1</span>
<span class="t" style="left:1113px;top:949.11px;font-size:17px;line-height:22px;color:#262626;font-weight:normal;">0.00</span>
<svg class="i" style="left:1206px;top:949.70px" width="22" height="18" viewBox="0 0 22 18"><path fill="none" stroke="#138a13" stroke-width="4.6" d="M1.5 8.5L7.5 14.5L19.5 2.5"/></svg>
<span class="t" style="left:1463px;top:949.11px;font-size:17px;line-height:22px;color:#262626;font-weight:normal;">N/A</span>
<span class="t" style="left:1701px;top:949.11px;font-size:17px;line-height:22px;color:#262626">(22) <span style="color:#1a1a33">Edit</span></span>
<svg class="i" style="left:1914.5px;top:949.00px" width="19" height="19" viewBox="0 0 19 19"><g transform="rotate(45 9.5 9.5)"><path fill="#2a2a2a" d="M6.2 1.4a1.4 1.4 0 0 1 1.4-1.4h3.8a1.4 1.4 0 0 1 1.4 1.4V4H6.2z M6.2 5.1h6.6V17.6L9.5 22.2 6.2 17.6z"/><rect x="7.6" y="6.2" width="1" height="10" fill="#bbb"/><circle cx="8.9" cy="18.6" r="1.25" fill="#fff"/></g></svg>
<svg class="i" style="left:1950px;top:948.20px" width="17" height="19" viewBox="0 0 17 19"><path fill="none" stroke="#2a2a2a" stroke-width="1.6" d="M0 3.9H17 M5 3.9V2.2C5 1.4 5.6 0.9 6.4 0.9h4.2c.8 0 1.4.5 1.4 1.3v1.7 M2.2 4.2l.4 12.2c0 .8.6 1.3 1.4 1.3h9c.8 0 1.4-.5 1.4-1.3l.4-12.2"/><path stroke="#2a2a2a" stroke-width="1.5" stroke-linecap="round" d="M5.5 7.3v6.8M8.5 7.3v6.8M11.5 7.3v6.8"/></svg>
<div style="position:absolute;left:20px;top:984.80px;width:2000px;height:64.0px;background:#ffffff"></div>
<span class="t" style="left:33px;top:1006.71px;font-size:17px;line-height:22px;color:#262626;font-weight:normal;">Personal Training</span>
<span class="t" style="left:453px;top:1006.71px;font-size:17px;line-height:22px;color:#262626;font-weight:normal;">1 hrs 0 min</span>
<span class="t" style="left:631px;top:1006.71px;font-size:17px;line-height:22px;color:#262626;font-weight:normal;">Personal Training</span>
<span class="t" style="left:900px;top:1006.71px;font-size:17px;line-height:22px;color:#262626;font-weight:normal;">1</span>
<span class="t" style="left:1007px;top:1006.71px;font-size:17px;line-height:22px;color:#262626;font-weight:normal;">1</span>
<span class="t" style="left:1113px;top:1006.71px;font-size:17px;line-height:22px;color:#262626;font-weight:normal;">10.00</span>
<svg class="i" style="left:1205.5px;top:1007.80px" width="18" height="18" viewBox="0 0 18 18"><path stroke="#ee2200" stroke-width="4.2" stroke-linecap="round" d="M2.5 2.5L15.5 15.5M15.5 2.5L2.5 15.5"/></svg>
<div style="position:absolute;left:1464px;top:998.80px;width:61px;height:34px;border:1px solid #cfcfcf;border-radius:5px;background:#fff"></div>
<span class="t" style="left:1476px;top:1006.71px;font-size:17px;line-height:22px;color:#111111;font-weight:normal;">Yes</span>
<svg class="i" style="left:1509px;top:1012.80px" width="13" height="8" viewBox="0 0 13 8"><path fill="none" stroke="#222" stroke-width="1.3" d="M1 1l5.5 5.5L12 1"/></svg>
<span class="t" style="left:1701px;top:1006.71px;font-size:17px;line-height:22px;color:#262626">(3) <span style="color:#1a1a33">Edit</span></span>
<svg class="i" style="left:1914.5px;top:1006.60px" width="19" height="19" viewBox="0 0 19 19"><g transform="rotate(45 9.5 9.5)"><path fill="#2a2a2a" d="M6.2 1.4a1.4 1.4 0 0 1 1.4-1.4h3.8a1.4 1.4 0 0 1 1.4 1.4V4H6.2z M6.2 5.1h6.6V17.6L9.5 22.2 6.2 17.6z"/><rect x="7.6" y="6.2" width="1" height="10" fill="#bbb"/><circle cx="8.9" cy="18.6" r="1.25" fill="#fff"/></g></svg>
<svg class="i" style="left:1950px;top:1005.80px" width="17" height="19" viewBox="0 0 17 19"><path fill="none" stroke="#2a2a2a" stroke-width="1.6" d="M0 3.9H17 M5 3.9V2.2C5 1.4 5.6 0.9 6.4 0.9h4.2c.8 0 1.4.5 1.4 1.3v1.7 M2.2 4.2l.4 12.2c0 .8.6 1.3 1.4 1.3h9c.8 0 1.4-.5 1.4-1.3l.4-12.2"/><path stroke="#2a2a2a" stroke-width="1.5" stroke-linecap="round" d="M5.5 7.3v6.8M8.5 7.3v6.8M11.5 7.3v6.8"/></svg>
<div style="position:absolute;left:20px;top:1048.80px;width:2000px;height:51.2px;background:#e6e6e6"></div>
<span class="t" style="left:33px;top:1064.31px;font-size:17px;line-height:22px;color:#262626;font-weight:normal;">Boxing 101</span>
<span class="t" style="left:453px;top:1064.31px;font-size:17px;line-height:22px;color:#262626;font-weight:normal;">3 hrs 0 min</span>
<span class="t" style="left:631px;top:1064.31px;font-size:17px;line-height:22px;color:#262626;font-weight:normal;">Boxing</span>
<span class="t" style="left:900px;top:1064.31px;font-size:17px;line-height:22px;color:#262626;font-weight:normal;">30</span>
<span class="t" style="left:1007px;top:1064.31px;font-size:17px;line-height:22px;color:#262626;font-weight:normal;">1</span>
<span class="t" style="left:1113px;top:1064.31px;font-size:17px;line-height:22px;color:#262626;font-weight:normal;">10.00</span>
<svg class="i" style="left:1206px;top:1064.90px" width="22" height="18" viewBox="0 0 22 18"><path fill="none" stroke="#138a13" stroke-width="4.6" d="M1.5 8.5L7.5 14.5L19.5 2.5"/></svg>
<span class="t" style="left:1463px;top:1064.31px;font-size:17px;line-height:22px;color:#262626;font-weight:normal;">N/A</span>
<span class="t" style="left:1701px;top:1064.31px;font-size:17px;line-height:22px;color:#262626">(23) <span style="color:#1a1a33">Edit</span></span>
<svg class="i" style="left:1914.5px;top:1064.20px" width="19" height="19" viewBox="0 0 19 19"><g transform="rotate(45 9.5 9.5)"><path fill="#2a2a2a" d="M6.2 1.4a1.4 1.4 0 0 1 1.4-1.4h3.8a1.4 1.4 0 0 1 1.4 1.4V4H6.2z M6.2 5.1h6.6V17.6L9.5 22.2 6.2 17.6z"/><rect x="7.6" y="6.2" width="1" height="10" fill="#bbb"/><circle cx="8.9" cy="18.6" r="1.25" fill="#fff"/></g></svg>
<svg class="i" style="left:1950px;top:1063.40px" width="17" height="19" viewBox="0 0 17 19"><path fill="none" stroke="#2a2a2a" stroke-width="1.6" d="M0 3.9H17 M5 3.9V2.2C5 1.4 5.6 0.9 6.4 0.9h4.2c.8 0 1.4.5 1.4 1.3v1.7 M2.2 4.2l.4 12.2c0 .8.6 1.3 1.4 1.3h9c.8 0 1.4-.5 1.4-1.3l.4-12.2"/><path stroke="#2a2a2a" stroke-width="1.5" stroke-linecap="round" d="M5.5 7.3v6.8M8.5 7.3v6.8M11.5 7.3v6.8"/></svg>
<div style="position:absolute;left:20px;top:1100.00px;width:2000px;height:51.2px;background:#ffffff"></div>
<span class="t" style="left:33px;top:1115.51px;font-size:17px;line-height:22px;color:#262626;font-weight:normal;">Steves Boxing Class</span>
<span class="t" style="left:453px;top:1115.51px;font-size:17px;line-height:22px;color:#262626;font-weight:normal;">0 hrs 50 min</span>
<span class="t" style="left:631px;top:1115.51px;font-size:17px;line-height:22px;color:#262626;font-weight:normal;">Boxing</span>
<span class="t" style="left:900px;top:1115.51px;font-size:17px;line-height:22px;color:#262626;font-weight:normal;">20</span>
<span class="t" style="left:1007px;top:1115.51px;font-size:17px;line-height:22px;color:#262626;font-weight:normal;">1</span>
<span class="t" style="left:1113px;top:1115.51px;font-size:17px;line-height:22px;color:#262626;font-weight:normal;">0.00</span>
<svg class="i" style="left:1206px;top:1116.10px" width="22" height="18" viewBox="0 0 22 18"><path fill="none" stroke="#138a13" stroke-width="4.6" d="M1.5 8.5L7.5 14.5L19.5 2.5"/></svg>
<span class="t" style="left:1463px;top:1115.51px;font-size:17px;line-height:22px;color:#262626;font-weight:normal;">N/A</span>
<span class="t" style="left:1701px;top:1115.51px;font-size:17px;line-height:22px;color:#262626">(23) <span style="color:#1a1a33">Edit</span></span>
<svg class="i" style="left:1914.5px;top:1115.40px" width="19" height="19" viewBox="0 0 19 19"><g transform="rotate(45 9.5 9.5)"><path fill="#2a2a2a" d="M6.2 1.4a1.4 1.4 0 0 1 1.4-1.4h3.8a1.4 1.4 0 0 1 1.4 1.4V4H6.2z M6.2 5.1h6.6V17.6L9.5 22.2 6.2 17.6z"/><rect x="7.6" y="6.2" width="1" height="10" fill="#bbb"/><circle cx="8.9" cy="18.6" r="1.25" fill="#fff"/></g></svg>
<svg class="i" style="left:1950px;top:1114.60px" width="17" height="19" viewBox="0 0 17 19"><path fill="none" stroke="#2a2a2a" stroke-width="1.6" d="M0 3.9H17 M5 3.9V2.2C5 1.4 5.6 0.9 6.4 0.9h4.2c.8 0 1.4.5 1.4 1.3v1.7 M2.2 4.2l.4 12.2c0 .8.6 1.3 1.4 1.3h9c.8 0 1.4-.5 1.4-1.3l.4-12.2"/><path stroke="#2a2a2a" stroke-width="1.5" stroke-linecap="round" d="M5.5 7.3v6.8M8.5 7.3v6.8M11.5 7.3v6.8"/></svg>
<div style="position:absolute;left:20px;top:1151.20px;width:2000px;height:51.2px;background:#e6e6e6"></div>
<span class="t" style="left:33px;top:1166.71px;font-size:17px;line-height:22px;color:#262626;font-weight:normal;">Boxing with Hannah</span>
<span class="t" style="left:453px;top:1166.71px;font-size:17px;line-height:22px;color:#262626;font-weight:normal;">1 hrs 0 min</span>
<span class="t" style="left:631px;top:1166.71px;font-size:17px;line-height:22px;color:#262626;font-weight:normal;">Boxing</span>
<span class="t" style="left:900px;top:1166.71px;font-size:17px;line-height:22px;color:#262626;font-weight:normal;">20</span>
<span class="t" style="left:1007px;top:1166.71px;font-size:17px;line-height:22px;color:#262626;font-weight:normal;">1</span>
<span class="t" style="left:1113px;top:1166.71px;font-size:17px;line-height:22px;color:#262626;font-weight:normal;">0.00</span>
<svg class="i" style="left:1206px;top:1167.30px" width="22" height="18" viewBox="0 0 22 18"><path fill="none" stroke="#138a13" stroke-width="4.6" d="M1.5 8.5L7.5 14.5L19.5 2.5"/></svg>
<span class="t" style="left:1463px;top:1166.71px;font-size:17px;line-height:22px;color:#262626;font-weight:normal;">N/A</span>
<span class="t" style="left:1701px;top:1166.71px;font-size:17px;line-height:22px;color:#262626">(23) <span style="color:#1a1a33">Edit</span></span>
<svg class="i" style="left:1914.5px;top:1166.60px" width="19" height="19" viewBox="0 0 19 19"><g transform="rotate(45 9.5 9.5)"><path fill="#2a2a2a" d="M6.2 1.4a1.4 1.4 0 0 1 1.4-1.4h3.8a1.4 1.4 0 0 1 1.4 1.4V4H6.2z M6.2 5.1h6.6V17.6L9.5 22.2 6.2 17.6z"/><rect x="7.6" y="6.2" width="1" height="10" fill="#bbb"/><circle cx="8.9" cy="18.6" r="1.25" fill="#fff"/></g></svg>
<svg class="i" style="left:1950px;top:1165.80px" width="17" height="19" viewBox="0 0 17 19"><path fill="none" stroke="#2a2a2a" stroke-width="1.6" d="M0 3.9H17 M5 3.9V2.2C5 1.4 5.6 0.9 6.4 0.9h4.2c.8 0 1.4.5 1.4 1.3v1.7 M2.2 4.2l.4 12.2c0 .8.6 1.3 1.4 1.3h9c.8 0 1.4-.5 1.4-1.3l.4-12.2"/><path stroke="#2a2a2a" stroke-width="1.5" stroke-linecap="round" d="M5.5 7.3v6.8M8.5 7.3v6.8M11.5 7.3v6.8"/></svg>
<div style="position:absolute;left:20px;top:1202.40px;width:2000px;height:51.2px;background:#ffffff"></div>
<span class="t" style="left:33px;top:1217.91px;font-size:17px;line-height:22px;color:#262626;font-weight:normal;">Pilates Reformer</span>
<span class="t" style="left:453px;top:1217.91px;font-size:17px;line-height:22px;color:#262626;font-weight:normal;">0 hrs 45 min</span>
<span class="t" style="left:631px;top:1217.91px;font-size:17px;line-height:22px;color:#262626;font-weight:normal;">Pilates</span>
<span class="t" style="left:900px;top:1217.91px;font-size:17px;line-height:22px;color:#262626;font-weight:normal;">12</span>
<span class="t" style="left:1007px;top:1217.91px;font-size:17px;line-height:22px;color:#262626;font-weight:normal;">1</span>
<span class="t" style="left:1113px;top:1217.91px;font-size:17px;line-height:22px;color:#262626;font-weight:normal;">0.00</span>
<svg class="i" style="left:1206px;top:1218.50px" width="22" height="18" viewBox="0 0 22 18"><path fill="none" stroke="#138a13" stroke-width="4.6" d="M1.5 8.5L7.5 14.5L19.5 2.5"/></svg>
<span class="t" style="left:1463px;top:1217.91px;font-size:17px;line-height:22px;color:#262626;font-weight:normal;">N/A</span>
<span class="t" style="left:1701px;top:1217.91px;font-size:17px;line-height:22px;color:#262626">(23) <span style="color:#1a1a33">Edit</span></span>
<svg class="i" style="left:1914.5px;top:1217.80px" width="19" height="19" viewBox="0 0 19 19"><g transform="rotate(45 9.5 9.5)"><path fill="#2a2a2a" d="M6.2 1.4a1.4 1.4 0 0 1 1.4-1.4h3.8a1.4 1.4 0 0 1 1.4 1.4V4H6.2z M6.2 5.1h6.6V17.6L9.5 22.2 6.2 17.6z"/><rect x="7.6" y="6.2" width="1" height="10" fill="#bbb"/><circle cx="8.9" cy="18.6" r="1.25" fill="#fff"/></g></svg>
<svg class="i" style="left:1950px;top:1217.00px" width="17" height="19" viewBox="0 0 17 19"><path fill="none" stroke="#2a2a2a" stroke-width="1.6" d="M0 3.9H17 M5 3.9V2.2C5 1.4 5.6 0.9 6.4 0.9h4.2c.8 0 1.4.5 1.4 1.3v1.7 M2.2 4.2l.4 12.2c0 .8.6 1.3 1.4 1.3h9c.8 0 1.4-.5 1.4-1.3l.4-12.2"/><path stroke="#2a2a2a" stroke-width="1.5" stroke-linecap="round" d="M5.5 7.3v6.8M8.5 7.3v6.8M11.5 7.3v6.8"/></svg>
<div style="position:absolute;left:20px;top:1253.60px;width:2000px;height:51.2px;background:#e6e6e6"></div>
<span class="t" style="left:33px;top:1269.11px;font-size:17px;line-height:22px;color:#262626;font-weight:normal;">Intermediate Unavail</span>
<span class="t" style="left:453px;top:1269.11px;font-size:17px;line-height:22px;color:#262626;font-weight:normal;">1 hrs 0 min</span>
<span class="t" style="left:631px;top:1269.11px;font-size:17px;line-height:22px;color:#262626;font-weight:normal;">Unavailable</span>
<span class="t" style="left:900px;top:1269.11px;font-size:17px;line-height:22px;color:#262626;font-weight:normal;">10</span>
<span class="t" style="left:1007px;top:1269.11px;font-size:17px;line-height:22px;color:#262626;font-weight:normal;">0</span>
<span class="t" style="left:1113px;top:1269.11px;font-size:17px;line-height:22px;color:#262626;font-weight:normal;">0.00</span>
<svg class="i" style="left:1206px;top:1269.70px" width="22" height="18" viewBox="0 0 22 18"><path fill="none" stroke="#138a13" stroke-width="4.6" d="M1.5 8.5L7.5 14.5L19.5 2.5"/></svg>
<span class="t" style="left:1463px;top:1269.11px;font-size:17px;line-height:22px;color:#262626;font-weight:normal;">N/A</span>
<span class="t" style="left:1701px;top:1269.11px;font-size:17px;line-height:22px;color:#262626">(23) <span style="color:#1a1a33">Edit</span></span>
<svg class="i" style="left:1914.5px;top:1269.00px" width="19" height="19" viewBox="0 0 19 19"><g transform="rotate(45 9.5 9.5)"><path fill="#2a2a2a" d="M6.2 1.4a1.4 1.4 0 0 1 1.4-1.4h3.8a1.4 1.4 0 0 1 1.4 1.4V4H6.2z M6.2 5.1h6.6V17.6L9.5 22.2 6.2 17.6z"/><rect x="7.6" y="6.2" width="1" height="10" fill="#bbb"/><circle cx="8.9" cy="18.6" r="1.25" fill="#fff"/></g></svg>
<svg class="i" style="left:1950px;top:1268.20px" width="17" height="19" viewBox="0 0 17 19"><path fill="none" stroke="#2a2a2a" stroke-width="1.6" d="M0 3.9H17 M5 3.9V2.2C5 1.4 5.6 0.9 6.4 0.9h4.2c.8 0 1.4.5 1.4 1.3v1.7 M2.2 4.2l.4 12.2c0 .8.6 1.3 1.4 1.3h9c.8 0 1.4-.5 1.4-1.3l.4-12.2"/><path stroke="#2a2a2a" stroke-width="1.5" stroke-linecap="round" d="M5.5 7.3v6.8M8.5 7.3v6.8M11.5 7.3v6.8"/></svg>
<div style="position:absolute;left:1910px;top:456px;width:25.5px;height:26.5px;border:2.5px solid #d42a2a;border-radius:6px"></div>
<svg class="i" style="left:1845px;top:390px" width="70" height="70" viewBox="0 0 70 70"><path stroke="#dd2a2a" stroke-width="5" d="M8 8L46 46"/><path fill="#dd2a2a" d="M62 65.5L34 54.8 53 36z"/></svg>
<div style="position:absolute;left:1914.5px;top:502.5px;width:55px;height:48.5px;border:2px solid #a5a5a5;border-radius:5px;background:#fff;box-shadow:0 1px 4px rgba(0,0,0,.25)"></div>
<span class="t" style="left:1929px;top:518.66px;font-size:18px;line-height:23px;color:#111111;font-weight:normal;">Edit</span>
<div style="position:absolute;left:1657px;top:1098px;width:84px;height:64px;border-radius:30px;background:#fff;box-shadow:0 2px 6px rgba(0,0,0,.15)"></div>
<svg class="i" style="left:1681.5px;top:1115px" width="37" height="29" viewBox="0 0 37 29"><path fill="none" stroke="#e6623e" stroke-width="2" stroke-linejoin="round" d="M7 1.2H1.2V7 M30 1.2h5.8V7 M7 27.8H1.2V22 M30 27.8h5.8V22"/><path stroke="#e6623e" stroke-width="1.7" d="M6 5V23.5M11 8V23.5M16 8V23.5M21 5V23.5M26 8V23.5M31 5V23.5"/><path stroke="#e6623e" stroke-width="1.7" d="M11 5v1.3M16 5v1.3M26 5v1.3"/></svg>
</div></body></html>
